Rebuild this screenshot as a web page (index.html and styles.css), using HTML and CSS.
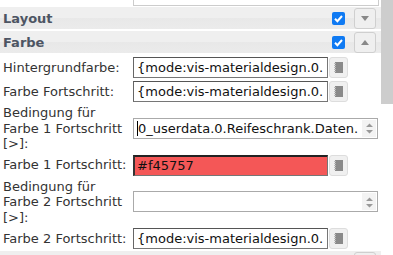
FILE: index.html
```html
<!DOCTYPE html>
<html>
<head>
<meta charset="utf-8">
<link rel="stylesheet" href="styles.css">
</head>
<body>
<div class="page">
  <div class="main">
    <div class="topbox-row"><div class="topbox"></div></div>
    <div class="group">
      <span class="group-title">Layout</span>
      <span class="check"><svg viewBox="0 0 13 13" width="13" height="13"><path d="M3 6.8 L5.4 9.2 L10 4" fill="none" stroke="#fff" stroke-width="2"/></svg></span>
      <span class="tbtn"><svg width="8" height="5" viewBox="0 0 8 5"><path d="M0 0 H8 L4 5 Z" fill="#888"/></svg></span>
    </div>
    <div class="group">
      <span class="group-title">Farbe</span>
      <span class="check"><svg viewBox="0 0 13 13" width="13" height="13"><path d="M3 6.8 L5.4 9.2 L10 4" fill="none" stroke="#fff" stroke-width="2"/></svg></span>
      <span class="tbtn"><svg width="8" height="5" viewBox="0 0 8 5"><path d="M0 5 H8 L4 0 Z" fill="#888"/></svg></span>
    </div>
    <div class="rows">
      <div class="row">
        <label class="lbl">Hintergrundfarbe:</label>
        <div class="field"><span class="inp">{mode:vis-materialdesign.0.</span><span class="pick"><svg width="9" height="11" viewBox="0 0 9 11"><rect x="1" y="0" width="8" height="11" fill="#8a8a8a"/><path d="M0 1.5h2M0 3.5h2M0 5.5h2M0 7.5h2M0 9.5h2" stroke="#bbb" stroke-width="1"/></svg></span></div>
      </div>
      <div class="row">
        <label class="lbl">Farbe Fortschritt:</label>
        <div class="field"><span class="inp">{mode:vis-materialdesign.0.</span><span class="pick"><svg width="9" height="11" viewBox="0 0 9 11"><rect x="1" y="0" width="8" height="11" fill="#8a8a8a"/><path d="M0 1.5h2M0 3.5h2M0 5.5h2M0 7.5h2M0 9.5h2" stroke="#bbb" stroke-width="1"/></svg></span></div>
      </div>
      <div class="row">
        <label class="lbl">Bedingung für Farbe 1 Fortschritt [&gt;]:</label>
        <div class="field"><span class="inp wide"><span class="caret"></span>0_userdata.0.Reifeschrank.Daten.<span class="spin"><svg width="9" height="12" viewBox="0 0 9 12"><path d="M1 5 H8 L4.5 1.5 Z M1 8 H8 L4.5 11.5 Z" fill="#999"/></svg></span></span></div>
      </div>
      <div class="row">
        <label class="lbl">Farbe 1 Fortschritt:</label>
        <div class="field"><span class="inp red">#f45757</span><span class="pick"><svg width="9" height="11" viewBox="0 0 9 11"><rect x="1" y="0" width="8" height="11" fill="#8a8a8a"/><path d="M0 1.5h2M0 3.5h2M0 5.5h2M0 7.5h2M0 9.5h2" stroke="#bbb" stroke-width="1"/></svg></span></div>
      </div>
      <div class="row">
        <label class="lbl">Bedingung für Farbe 2 Fortschritt [&gt;]:</label>
        <div class="field"><span class="inp wide"><span class="spin"><svg width="9" height="12" viewBox="0 0 9 12"><path d="M1 5 H8 L4.5 1.5 Z M1 8 H8 L4.5 11.5 Z" fill="#999"/></svg></span></span></div>
      </div>
      <div class="row">
        <label class="lbl">Farbe 2 Fortschritt:</label>
        <div class="field"><span class="inp">{mode:vis-materialdesign.0.</span><span class="pick"><svg width="9" height="11" viewBox="0 0 9 11"><rect x="1" y="0" width="8" height="11" fill="#8a8a8a"/><path d="M0 1.5h2M0 3.5h2M0 5.5h2M0 7.5h2M0 9.5h2" stroke="#bbb" stroke-width="1"/></svg></span></div>
      </div>
    </div>
    <div class="group next"><span class="tbtn"></span></div>
  </div>
  <div class="scrollbar"><div class="thumb"></div></div>
</div>
</body>
</html>
```
FILE: styles.css
```css
* { box-sizing: border-box; }
html, body { margin: 0; padding: 0; background: #fff; }
body { font-family: "DejaVu Sans", Verdana, sans-serif; font-size: 12px; color: #333; overflow: hidden; }
.page { display: flex; width: 393px; height: 255px; overflow: hidden; }
.main { flex: 1; display: flex; flex-direction: column; }
.scrollbar { width: 12px; background: #fff; }
.thumb { height: 104px; background: #cdcdcd; }
.topbox-row { height: 7px; flex: none; padding-left: 133px; padding-right: 2px; }
.topbox { height: 6px; border: 1px solid #ccc; border-top: none; background: #fff; }
.group { flex: none; height: 22px; margin-bottom: 2px; display: flex; align-items: center; padding-left: 3px; padding-right: 5px;
  background: linear-gradient(#efefef 0, #efefef 50%, #e8e8e8 50%, #ebebeb 100%); }
.group-title { font-weight: bold; font-size: 13px; color: #4d5563; flex: 1; }
.check { width: 13px; height: 13px; background: #0f7af3; border-radius: 2px; display: flex; margin-right: 9px; }
.tbtn { width: 22px; height: 21px; border: 1px solid #cfcfcf; border-radius: 3px; background: #efefef; display: flex; align-items: center; justify-content: center; }
.rows { flex: none; display: flex; flex-direction: column; padding: 2px 0 0 3px; gap: 3px; }
.row { display: flex; align-items: center; }
.lbl { width: 130px; line-height: 15.5px; font-size: 13px; }
.field { display: flex; align-items: center; }
.inp { position: relative; width: 195px; height: 21px; border: 1px solid #767676; border-top-color: #555; border-left-color: #666; background: #fff; font-size: 13px; line-height: 19px; padding-left: 3px; white-space: nowrap; overflow: hidden; color: #111; }
.inp.wide { width: 245px; border-color: #aaa; }
.inp.red { background: #f45757; border-top: 2px solid #222; border-left: 2px solid #333; line-height: 18px; padding-left: 2px; }
.caret { display: inline-block; width: 1px; height: 15px; background: #000; vertical-align: middle; margin-top: -2px; }
.spin { position: absolute; right: 1px; top: 1px; width: 14px; height: 17px; background: #f3f3f3; display: flex; align-items: center; justify-content: center; }
.pick { width: 19px; height: 21px; margin-left: 1px; border: 1px solid #ddd; border-radius: 3px; background: #f0f0f0; display: flex; align-items: center; justify-content: center; }
.group.next { margin-top: 2px; margin-bottom: 0; justify-content: flex-end; }
```
